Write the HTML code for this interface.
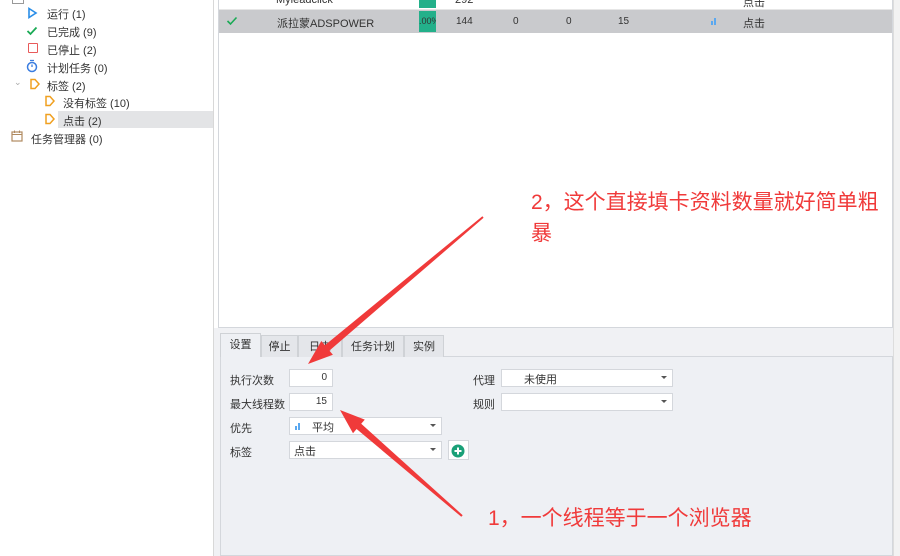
<!DOCTYPE html><html><head><style>
body{margin:0;width:900px;height:556px;overflow:hidden;background:#fff;font-family:"Liberation Sans","Noto Sans CJK SC",sans-serif;font-size:11px;color:#333;position:relative}
.a{position:absolute}
.t{position:absolute;white-space:nowrap}
.inp{position:absolute;background:#fff;border:1px solid #d4d7dc;height:16px;box-sizing:border-box}
.dd{position:absolute;right:5px;top:6px;width:0;height:0;border-left:3px solid transparent;border-right:3px solid transparent;border-top:3px solid #555}
.tab{position:absolute;top:335px;height:22px;line-height:22px;text-align:center;background:#e4e6ea;border:1px solid #cfd2d6;border-bottom:none;box-sizing:border-box;font-size:11px}
</style></head><body>
<div class="a" style="left:0;top:0;width:213px;height:556px;background:#fff;border-right:1px solid #d8d8d8"></div>
<div class="a" style="left:58px;top:111px;width:155px;height:17px;background:#e3e4e6"></div>
<div class="a" style="left:12px;top:0;width:10px;height:3px;border:1px solid #999;border-top:none"></div>
<svg class="a" style="left:26px;top:7px" width="12" height="12"><path d="M3 1.5L10 6L3 10.5Z" fill="none" stroke="#2a8ee8" stroke-width="1.6"/></svg>
<div class="t" style="left:47px;top:6px">运行 (1)</div>
<svg class="a" style="left:26px;top:25px" width="12" height="12"><path d="M1.5 6L4.5 9L10.5 2.5" fill="none" stroke="#1aaa55" stroke-width="1.8"/></svg>
<div class="t" style="left:47px;top:24px">已完成 (9)</div>
<div class="a" style="left:28px;top:43px;width:8px;height:8px;border:1.5px solid #e85a5a;border-radius:1px"></div>
<div class="t" style="left:47px;top:42px">已停止 (2)</div>
<svg class="a" style="left:26px;top:59px" width="12" height="14"><circle cx="6" cy="8" r="4.5" fill="none" stroke="#3b7de0" stroke-width="1.5"/><path d="M4 1.5H8M6 8V5.5" stroke="#3b7de0" stroke-width="1.3"/></svg>
<div class="t" style="left:47px;top:60px">计划任务 (0)</div>
<div class="t" style="left:14px;top:77px;color:#aaa;font-size:9px">⌄</div>
<svg class="a" style="left:29px;top:78px" width="12" height="12"><path d="M2 1.5H6L10 6L6 10.5H2Z" fill="none" stroke="#f0a020" stroke-width="1.5"/></svg>
<div class="t" style="left:47px;top:78px">标签 (2)</div>
<svg class="a" style="left:44px;top:95px" width="12" height="12"><path d="M2 1.5H6L10 6L6 10.5H2Z" fill="none" stroke="#f0a020" stroke-width="1.5"/></svg>
<div class="t" style="left:63px;top:95px">没有标签 (10)</div>
<svg class="a" style="left:44px;top:113px" width="12" height="12"><path d="M2 1.5H6L10 6L6 10.5H2Z" fill="none" stroke="#f0a020" stroke-width="1.5"/></svg>
<div class="t" style="left:63px;top:113px">点击 (2)</div>
<svg class="a" style="left:11px;top:130px" width="12" height="12"><rect x="1" y="2" width="10" height="9" fill="none" stroke="#b08a60" stroke-width="1.2"/><path d="M1 4.5H11M3.5 0.5V3M8.5 0.5V3" stroke="#b08a60"/></svg>
<div class="t" style="left:31px;top:131px">任务管理器 (0)</div>
<div class="a" style="left:218px;top:0;width:675px;height:328px;border:1px solid #d4d7dc;border-top:none;box-sizing:border-box;background:#fff"></div>
<div class="a" style="left:893px;top:0;width:7px;height:556px;background:#f2f2f2;border-left:1px solid #ddd"></div>
<div class="a" style="left:219px;top:0;width:673px;height:9px;border-bottom:1px solid #e6e6e6"></div>
<div class="t" style="left:276px;top:-6px;font-size:11px">Myleadclick</div>
<div class="a" style="left:419px;top:0;width:17px;height:8px;background:#23b08a"></div>
<div class="t" style="left:455px;top:-6px">292</div>
<div class="a" style="left:219px;top:10px;width:673px;height:23px;background:#c9cacd"></div>
<svg class="a" style="left:226px;top:15px" width="12" height="12"><path d="M1.5 6L4.5 9L10.5 2.5" fill="none" stroke="#1aaa55" stroke-width="1.6"/></svg>
<div class="t" style="left:277px;top:15px;font-size:11px">派拉蒙ADSPOWER</div>
<div class="a" style="left:419px;top:11px;width:17px;height:21px;background:#23b08a;font-size:9px;line-height:21px;color:#333;overflow:hidden">.00%</div>
<div class="t" style="left:456px;top:16px;font-size:10px">144</div>
<div class="t" style="left:513px;top:16px;font-size:10px">0</div>
<div class="t" style="left:566px;top:16px;font-size:10px">0</div>
<div class="t" style="left:618px;top:16px;font-size:10px">15</div>
<div class="a" style="left:711px;top:21px;width:2px;height:4px;background:#5aa8f0"></div>
<div class="a" style="left:714px;top:18px;width:2px;height:7px;background:#5aa8f0"></div>
<div class="t" style="left:743px;top:15px">点击</div>
<div class="t" style="left:743px;top:-6px">点击</div>
<div class="a" style="left:214px;top:328px;width:679px;height:228px;background:#f0f1f4"></div>
<div class="a" style="left:220px;top:356px;width:673px;height:200px;background:#eef0f4;border:1px solid #d4d7dc;box-sizing:border-box"></div>
<div class="tab" style="left:220px;width:41px;background:#eef0f4;top:333px;height:24px">设置</div>
<div class="tab" style="left:261px;width:37px">停止</div>
<div class="tab" style="left:298px;width:44px">日志</div>
<div class="tab" style="left:342px;width:62px">任务计划</div>
<div class="tab" style="left:404px;width:40px">实例</div>
<div class="t" style="left:230px;top:372px">执行次数</div>
<div class="inp" style="left:289px;top:369px;width:44px;height:18px"><span class="t" style="right:5px;top:2px;font-size:10px">0</span></div>
<div class="t" style="left:230px;top:396px">最大线程数</div>
<div class="inp" style="left:289px;top:393px;width:44px;height:18px"><span class="t" style="right:5px;top:2px;font-size:10px">15</span></div>
<div class="t" style="left:230px;top:420px">优先</div>
<div class="inp" style="left:289px;top:417px;width:153px;height:18px"><span class="a" style="left:5px;top:8px;width:2px;height:4px;background:#5aa8f0"></span><span class="a" style="left:8px;top:5px;width:2px;height:7px;background:#5aa8f0"></span><span class="t" style="left:22px;top:1px">平均</span><span class="dd"></span></div>
<div class="t" style="left:230px;top:444px">标签</div>
<div class="inp" style="left:289px;top:441px;width:153px;height:18px"><span class="t" style="left:4px;top:1px">点击</span><span class="dd"></span></div>
<div class="inp" style="left:448px;top:440px;width:21px;height:20px"><svg class="a" style="left:2px;top:3px" width="14" height="14"><circle cx="7" cy="7" r="6.5" fill="#1aa078"/><path d="M7 3.5V10.5M3.5 7H10.5" stroke="#fff" stroke-width="2"/></svg></div>
<div class="t" style="left:473px;top:372px">代理</div>
<div class="inp" style="left:501px;top:369px;width:172px;height:18px"><span class="t" style="left:22px;top:1px">未使用</span><span class="dd"></span></div>
<div class="t" style="left:473px;top:396px">规则</div>
<div class="inp" style="left:501px;top:393px;width:172px;height:18px"><span class="dd"></span></div>
<svg class="a" style="left:0;top:0" width="900" height="556">
<path d="M462.7 515.2L361.2 423.8L364.8 419.6L340 410L353 433.2L356.6 429L461.3 516.8Z" fill="#f03a3a"/>
<path d="M483.6 217.8L329.4 350.6L332.9 354.8L308 364L321.3 341L324.9 345.2L482.4 216.2Z" fill="#f03a3a"/>
</svg>
<div class="t" style="left:488px;top:502px;color:#f03a3a;font-size:21px">1，一个线程等于一个浏览器</div>
<div class="t" style="left:531px;top:187px;color:#f03a3a;font-size:21px;line-height:31px;white-space:normal;width:362px">2，这个直接填卡资料数量就好简单粗暴</div>
</body></html>
